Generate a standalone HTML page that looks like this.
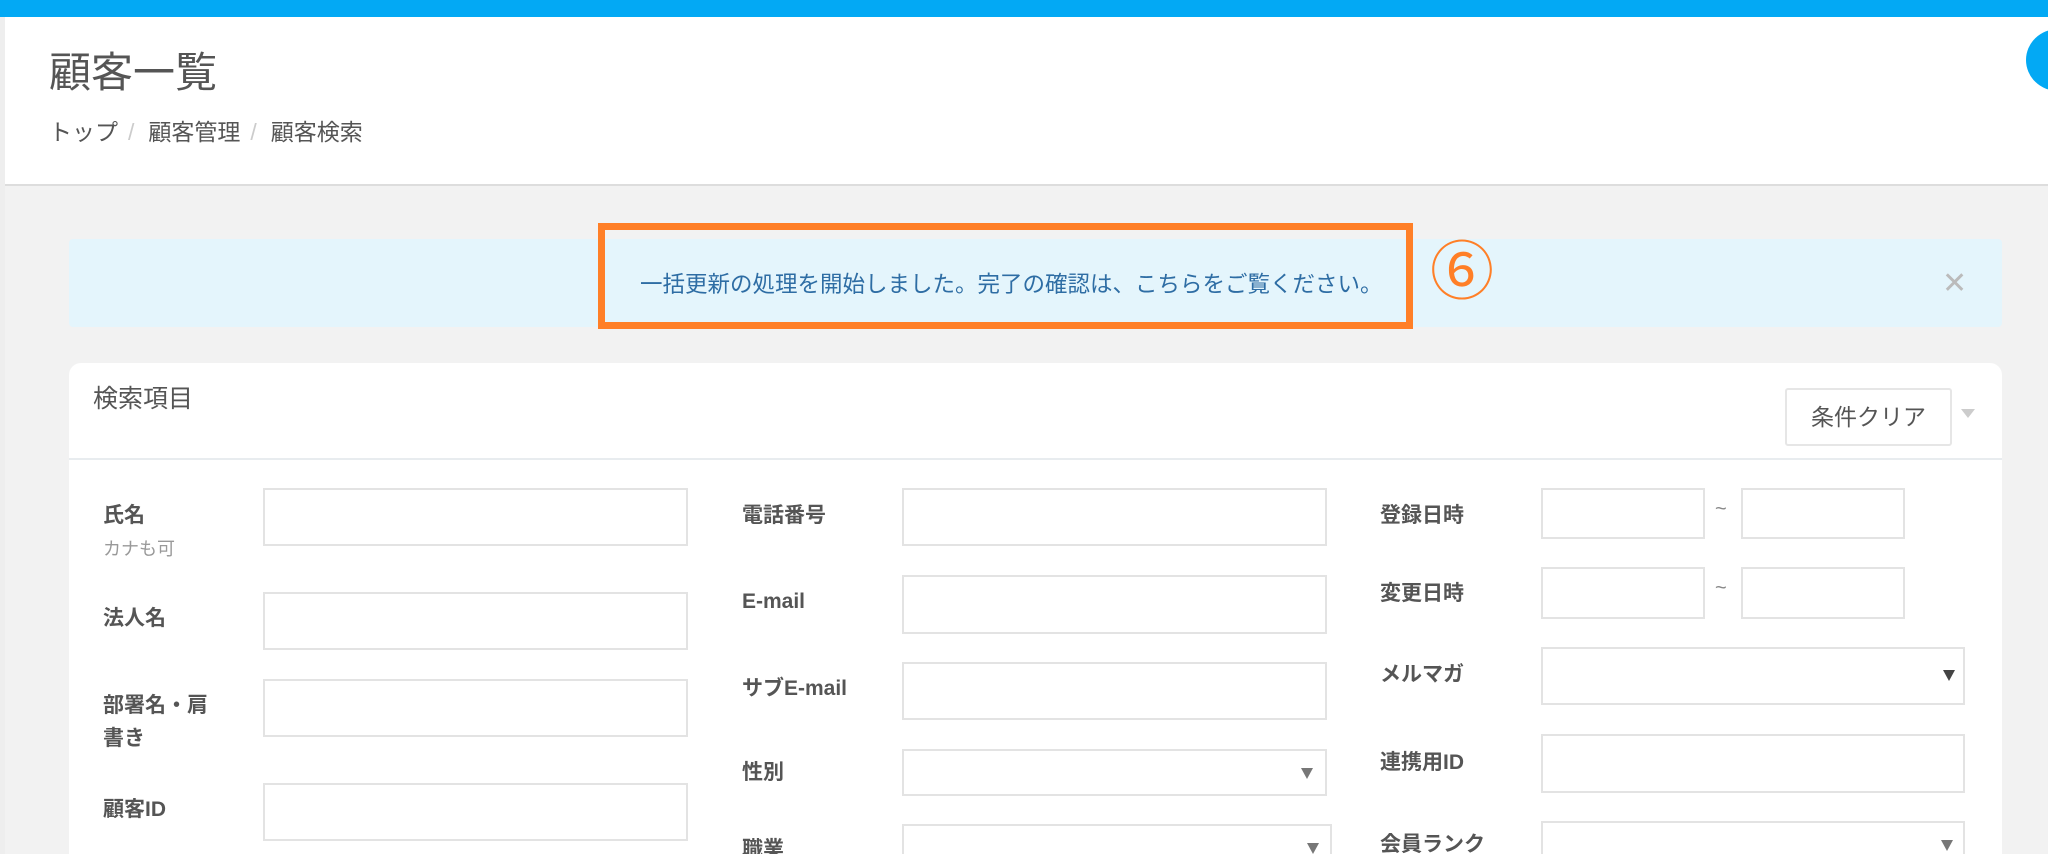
<!DOCTYPE html>
<html><head><meta charset="utf-8">
<style>
*{box-sizing:border-box;margin:0;padding:0}
html,body{width:2048px;height:854px;overflow:hidden}
body{background:#f2f2f2;font-family:"Liberation Sans","Noto Sans CJK JP",sans-serif;position:relative;color:#555}
.abs{position:absolute}
.top{left:0;top:0;width:2048px;height:17px;background:#03a9f4;box-shadow:0 2px 3px rgba(0,0,0,.25)}
.hdr{left:5px;top:17px;width:2043px;height:169px;background:#fff;border-bottom:2px solid #ddd}
.lstrip{left:0;top:17px;width:5px;height:837px;background:#eee}
.title{left:49px;top:48px;font-size:42px;color:#555;line-height:50px}
.bc{left:49px;top:117px;font-size:23px;color:#555;line-height:30px}
.bc span{color:#ccc;margin:0 14px 0 10px}
.circ{left:2026px;top:29px;width:64px;height:62px;border-radius:50%;background:#03a9f4}
.alert{left:69px;top:239px;width:1933px;height:88px;background:#e4f5fc;border-radius:4px}
.obox{left:598px;top:223px;width:815px;height:106px;border:7px solid #ff7f27}
.msg{left:640px;top:270px;font-size:22.5px;color:#2e6da4;line-height:30px;white-space:nowrap}
.six{left:1430px;top:236px;font-size:64px;color:#ff7f27;line-height:72px}
.x{left:1942px;top:266px;font-size:30px;color:#bbb;line-height:36px}
.panel{left:69px;top:363px;width:1933px;height:520px;background:#fff;border-radius:12px}
.pline{left:69px;top:458px;width:1933px;height:2px;background:#e8ecef}
.ptitle{left:93px;top:383px;font-size:25px;color:#555;line-height:32px}
.btn{left:1785px;top:388px;width:167px;height:58px;border:2px solid #e6e6e6;border-radius:3px;font-size:23px;color:#555;text-align:center;line-height:54px}
.tri{left:1961px;top:409px;width:0;height:0;border-left:7px solid transparent;border-right:7px solid transparent;border-top:9px solid #ccc}
.in{border:2px solid #e3e3e3;background:#fff}
.lb{font-size:21px;font-weight:bold;color:#555;line-height:28px}
.sm{font-size:18px;color:#999;line-height:24px}
.arr{width:0;height:0;border-left:6px solid transparent;border-right:6px solid transparent;border-top:11px solid #777}
.arrd{border-top-color:#444}
.tl{font-size:20px;color:#888}
</style></head><body>
<div class="abs top"></div>
<div class="abs lstrip"></div>
<div class="abs hdr"></div>
<div class="abs title">顧客一覧</div>
<div class="abs bc">トップ<span>/</span>顧客管理<span>/</span>顧客検索</div>
<div class="abs circ"></div>

<div class="abs alert"></div>
<div class="abs obox"></div>
<div class="abs msg">一括更新の処理を開始しました。完了の確認は、こちらをご覧ください。</div>
<div class="abs six">⑥</div>
<div class="abs x">✕</div>

<div class="abs panel"></div>
<div class="abs pline"></div>
<div class="abs ptitle">検索項目</div>
<div class="abs btn">条件クリア</div>
<div class="abs tri"></div>

<div class="abs lb" style="left:103px;top:502px">氏名</div>
<div class="abs sm" style="left:103px;top:537px">カナも可</div>
<div class="abs in" style="left:263px;top:488px;width:425px;height:58px"></div>
<div class="abs lb" style="left:103px;top:605px">法人名</div>
<div class="abs in" style="left:263px;top:592px;width:425px;height:58px"></div>
<div class="abs lb" style="left:103px;top:692px">部署名・肩</div>
<div class="abs lb" style="left:103px;top:725px">書き</div>
<div class="abs in" style="left:263px;top:679px;width:425px;height:58px"></div>
<div class="abs lb" style="left:103px;top:796px">顧客ID</div>
<div class="abs in" style="left:263px;top:783px;width:425px;height:58px"></div>

<div class="abs lb" style="left:742px;top:502px">電話番号</div>
<div class="abs in" style="left:902px;top:488px;width:425px;height:58px"></div>
<div class="abs lb" style="left:742px;top:588px">E-mail</div>
<div class="abs in" style="left:902px;top:575px;width:425px;height:59px"></div>
<div class="abs lb" style="left:742px;top:675px">サブE-mail</div>
<div class="abs in" style="left:902px;top:662px;width:425px;height:58px"></div>
<div class="abs lb" style="left:742px;top:759px">性別</div>
<div class="abs in" style="left:902px;top:749px;width:425px;height:47px"></div>
<div class="abs arr" style="left:1301px;top:768px"></div>
<div class="abs lb" style="left:742px;top:836px">職業</div>
<div class="abs in" style="left:902px;top:824px;width:430px;height:50px"></div>
<div class="abs arr" style="left:1307px;top:843px"></div>

<div class="abs lb" style="left:1380px;top:502px">登録日時</div>
<div class="abs in" style="left:1541px;top:488px;width:164px;height:51px"></div>
<div class="abs tl" style="left:1715px;top:498px">~</div>
<div class="abs in" style="left:1741px;top:488px;width:164px;height:51px"></div>
<div class="abs lb" style="left:1380px;top:580px">変更日時</div>
<div class="abs in" style="left:1541px;top:567px;width:164px;height:52px"></div>
<div class="abs tl" style="left:1715px;top:577px">~</div>
<div class="abs in" style="left:1741px;top:567px;width:164px;height:52px"></div>
<div class="abs lb" style="left:1380px;top:661px">メルマガ</div>
<div class="abs in" style="left:1541px;top:647px;width:424px;height:58px"></div>
<div class="abs arr arrd" style="left:1943px;top:670px"></div>
<div class="abs lb" style="left:1380px;top:749px">連携用ID</div>
<div class="abs in" style="left:1541px;top:734px;width:424px;height:59px"></div>
<div class="abs lb" style="left:1380px;top:831px">会員ランク</div>
<div class="abs in" style="left:1541px;top:821px;width:424px;height:50px"></div>
<div class="abs arr" style="left:1941px;top:840px"></div>
</body></html>
